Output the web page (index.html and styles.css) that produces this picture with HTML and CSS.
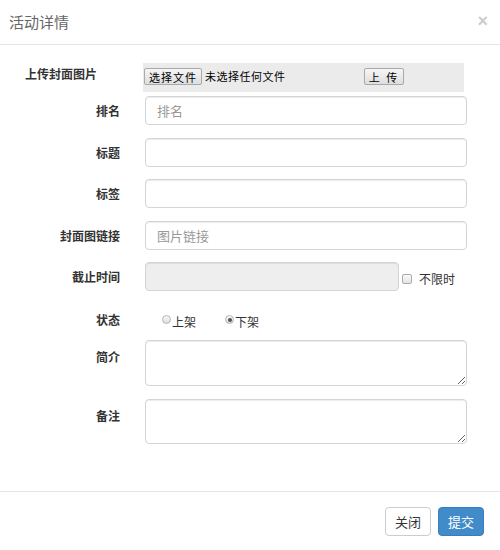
FILE: index.html
```html
<!DOCTYPE html>
<html lang="zh">
<head>
<meta charset="utf-8">
<title>活动详情</title>
<link rel="stylesheet" href="styles.css">
</head>
<body>
<div class="modal">
  <div class="modal-header">
    <span class="modal-title">活动详情</span>
    <span class="close">×</span>
  </div>
  <div class="modal-body">
    <div class="row row-upload">
      <div class="lbl-upload">上传封面图片</div>
      <div class="upload-box">
        <span class="file-btn">选择文件</span>
        <span class="file-text">未选择任何文件</span>
        <span class="upload-btn">上 传</span>
      </div>
    </div>
    <div class="row">
      <div class="lbl">排名</div>
      <div class="ctl"><input class="input" type="text" placeholder="排名"></div>
    </div>
    <div class="row">
      <div class="lbl">标题</div>
      <div class="ctl"><input class="input" type="text"></div>
    </div>
    <div class="row">
      <div class="lbl">标签</div>
      <div class="ctl"><input class="input" type="text"></div>
    </div>
    <div class="row">
      <div class="lbl">封面图链接</div>
      <div class="ctl"><input class="input" type="text" placeholder="图片链接"></div>
    </div>
    <div class="row">
      <div class="lbl">截止时间</div>
      <div class="ctl ctl-date">
        <input class="input input-disabled" type="text" disabled>
        <label class="check"><span class="checkbox"></span>不限时</label>
      </div>
    </div>
    <div class="row row-status">
      <div class="lbl lbl-status">状态</div>
      <div class="ctl radios">
        <label class="radio"><span class="dot"></span>上架</label>
        <label class="radio"><span class="dot checked"></span>下架</label>
      </div>
    </div>
    <div class="row row-top">
      <div class="lbl lbl-top">简介</div>
      <div class="ctl"><textarea class="textarea ta1"></textarea></div>
    </div>
    <div class="row row-top row-last">
      <div class="lbl lbl-top">备注</div>
      <div class="ctl"><textarea class="textarea ta2"></textarea></div>
    </div>
  </div>
  <div class="modal-footer">
    <button class="btn btn-default">关闭</button>
    <button class="btn btn-primary">提交</button>
  </div>
</div>
</body>
</html>
```

FILE: styles.css
```css
* { box-sizing: border-box; }
html, body { margin: 0; padding: 0; background: #fff; }
body {
  font-family: "Noto Sans CJK SC", "Liberation Sans", sans-serif;
  font-size: 12px;
  color: #333;
}
.modal { width: 500px; height: 550px; background: #fff; }
.modal-header {
  height: 45px;
  border-bottom: 1px solid #e5e5e5;
  display: flex;
  align-items: center;
  justify-content: space-between;
  padding: 0 12px 0 9px;
}
.modal-title { font-size: 15px; color: #666; line-height: 1; margin-top: -1px; }
.close { font-size: 18px; font-weight: bold; color: #000; opacity: .2; line-height: 1; margin-top: -2px; font-family: "Liberation Sans", sans-serif; }
.modal-body { padding: 18px 0 47px 0; }
.row { display: flex; align-items: center; margin-bottom: 12.5px; }
.row-top { align-items: flex-start; }
.row-last { margin-bottom: 0; }
.row-upload { align-items: flex-start; margin-bottom: 4px; }
.lbl {
  width: 120px; flex: none; text-align: right;
  font-weight: bold; font-size: 12px; color: #333; line-height: 17px;
}
.lbl-top { padding-top: 8px; }
.lbl-upload {
  width: 143px; flex: none; padding-left: 25px; padding-top: 2px;
  font-weight: bold; font-size: 12px; line-height: 17px; color: #333;
}
.upload-box {
  width: 321px; height: 29px; background: #ebebeb;
  display: flex; align-items: flex-start; padding: 5px 0 0 1px;
}
.file-btn, .upload-btn {
  display: inline-flex; align-items: center; justify-content: center;
  height: 17px; border: 1px solid #a9a9a9; border-radius: 2px;
  background: linear-gradient(#f6f6f6, #dedede);
  font-size: 11px; color: #000; letter-spacing: 1px;
}
.file-btn { width: 58px; }
.file-text { margin-left: 3px; font-size: 11px; color: #000; line-height: 17px; letter-spacing: 0.5px; }
.upload-btn { width: 40px; margin-left: auto; margin-right: 60px; letter-spacing: 2px; }
.ctl { margin-left: 25px; width: 322px; }
.input, .textarea {
  width: 322px; height: 29px; display: block;
  border: 1px solid #d4d4d4; border-radius: 4px;
  box-shadow: inset 0 1px 1px rgba(0,0,0,.075);
  padding: 0 11px; font-size: 13px; color: #555;
  font-family: "Noto Sans CJK SC", "Liberation Sans", sans-serif;
  background: #fff; outline: none;
}
.input::placeholder { color: #999; }
.ctl-date { display: flex; align-items: center; width: 320px; }
.input-disabled { width: 254px; background: #eee; }
.check { display: flex; align-items: center; margin-left: 3px; margin-top: 4px; font-size: 12px; color: #333; }
.checkbox {
  width: 10px; height: 10px; border: 1px solid #aaa; border-radius: 2px;
  background: linear-gradient(#fafafa, #e4e4e4); margin-right: 7px;
}
.row-status { height: 24px; align-items: flex-start; }
.lbl-status { padding-top: 7px; }
.radios { display: flex; align-items: center; padding-left: 17px; padding-top: 9px; line-height: 17px; }
.radio { display: flex; align-items: center; font-size: 12px; color: #333; margin-right: 29px; }
.dot {
  width: 9px; height: 9px; border-radius: 50%; border: 1px solid #b5b5b5;
  background: linear-gradient(#fafafa, #dcdcdc); margin-right: 1px; margin-top: -3px;
  position: relative;
}
.dot.checked::after {
  content: ""; position: absolute; left: 1.5px; top: 1.5px; width: 4px; height: 4px;
  border-radius: 50%; background: #555;
}
.textarea { padding: 6px 11px; resize: vertical; }
.ta1 { height: 46px; }
.ta2 { height: 45px; }
.modal-footer {
  border-top: 1px solid #e5e5e5;
  display: flex; justify-content: flex-end; gap: 7px;
  padding: 15px 16px 0 0;
}
.btn {
  width: 46px; height: 29px; border-radius: 4px; font-size: 13px;
  font-family: "Noto Sans CJK SC", "Liberation Sans", sans-serif;
  padding: 0; display: inline-flex; align-items: center; justify-content: center;
}
.btn-default { background: #fff; border: 1px solid #ccc; color: #333; }
.btn-primary { background: #428bca; border: 1px solid #357ebd; color: #fff; }
```
